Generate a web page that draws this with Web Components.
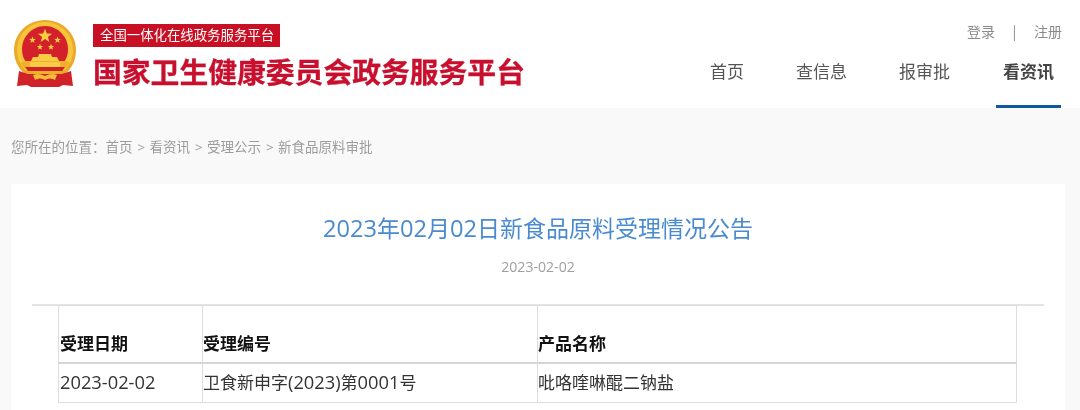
<!DOCTYPE html>
<html lang="zh-CN"><head><meta charset="utf-8"><title>新食品原料受理情况公告</title>
<style>
html,body{margin:0;height:410px;overflow:hidden;background:#f9f9f9;font-family:"Open Sans","Noto Sans CJK SC",sans-serif}
body{filter:blur(.35px)}
</style></head><body>
<site-header></site-header>
<bread-crumb></bread-crumb>
<article-card heading="2023年02月02日新食品原料受理情况公告" date="2023-02-02">
  <data-table></data-table>
</article-card>
<script>
const make=(name,html)=>customElements.define(name,class extends HTMLElement{
  constructor(){super();this.attachShadow({mode:'open'}).innerHTML=typeof html==='function'?html(this):html}
});
const star=(x,y,r)=>{let d='';for(let i=0;i<10;i++){const R=i%2?r*.4:r,a=-Math.PI/2+i*Math.PI/5;d+=(i?'L':'M')+(x+R*Math.cos(a)).toFixed(1)+' '+(y+R*Math.sin(a)).toFixed(1)}return `<path d="${d}Z"/>`};
const emblem=`<svg width="66" height="70" viewBox="0 0 66 70" aria-hidden="true" style="filter:blur(.5px);display:block">
<path d="M33 1C15 1 2 15 2 31c0 10 4 18 11 24h40c7-6 11-14 11-24C64 15 51 1 33 1Z" fill="#eba92a"/>
<path d="M33 3C17 3 5 16 5 31c0 8 3 15 8 20h40c5-5 8-12 8-20C61 16 49 3 33 3Z" fill="#f6c53c"/>
<path d="M33 7C20 7 10 18 10 30c0 5 1 9 4 13h38c3-4 4-8 4-13C56 18 46 7 33 7Z" fill="#d3202a"/>
<g fill="#f8cf3f">${star(33,17,7.500)}${star(20.500,21,3.600)}${star(45.500,21,3.600)}${star(28,28,3.400)}${star(39,28,3.400)}</g>
<path d="M8 44c6 8 15 12 25 12s19-4 25-12l-5-2H13Z" fill="#f0b02c"/>
<path d="M27 35h12l1 3h5l2 4H19l2-4h5ZM18 43h30v5H18Z" fill="#f8cc45"/>
<path d="M13 48h40l-3 4H16Z" fill="#cf2229"/>
<path d="M7 52l9 3h34l9-3 2 15-10-1-4 2H19l-4-2-10 1Z" fill="#cf2229"/>
<path d="M21 56c4-2 8-1 12 1 4-2 8-3 12-1l-2 5c-4-2-7-2-10 0-3-2-6-2-10 0Z" fill="#f4bd35"/>
</svg>`;
make('site-header',`<style>
:host{display:flex;height:108px;background:#fff;justify-content:space-between;box-sizing:border-box;padding-left:12px;padding-right:19px}
.brand{display:flex;gap:15px;align-items:flex-start;padding-top:19px}
.names{display:flex;flex-direction:column;align-items:flex-start;padding-top:5px}
.tag{background:#c80f23;color:#fff;font-size:13.400px;line-height:23px;padding:0 6px 0 7px;white-space:nowrap}
h1{margin:7px 0 0;color:#c8102e;font-size:28.800px;line-height:36px;font-weight:700;white-space:nowrap;-webkit-text-stroke:.3px #c8102e}
.right{display:flex;flex-direction:column;align-items:flex-end;font-family:"Noto Sans CJK SC",sans-serif}
.user{display:flex;align-items:center;color:#8a8a8a;font-size:14px;line-height:20px;margin-top:21px;margin-right:-1px}
.user b{font-weight:400;width:39px;text-align:center}
nav{display:flex;gap:38px;margin-top:10px;height:57px}
nav a{box-sizing:border-box;height:57px;padding:0 7px;font-size:17px;line-height:30px;padding-top:5px;color:#555}
nav a.on{font-weight:700;color:#444;border-bottom:3px solid #0f5a9c;margin-left:1px}
</style>
<div class="brand"><div>${emblem}</div><div class="names"><div class="tag">全国一体化在线政务服务平台</div><h1>国家卫生健康委员会政务服务平台</h1></div></div>
<div class="right"><div class="user"><span>登录</span><b>|</b><span>注册</span></div>
<nav><a>首页</a><a>查信息</a><a>报审批</a><a class="on">看资讯</a></nav></div>`);
make('bread-crumb',`<style>:host{display:flex;height:76px;box-sizing:border-box;padding:30px 0 0 11px;color:#9c9c9c;font-size:13.500px;line-height:18px;white-space:nowrap}
i{font-style:normal;margin:0 5px;width:7px;text-align:center}</style>
<span>您所在的位置：</span><span>首页</span><i>&gt;</i><span>看资讯</span><i>&gt;</i><span>受理公示</span><i>&gt;</i><span>新食品原料审批</span>`);
make('article-card',h=>`<style>:host{display:block;margin:0 15px 0 11px;background:#fff;padding:29px 21px 0;height:226px;box-sizing:border-box}
h2{margin:0;text-align:center;font-weight:400;font-size:23px;line-height:30px;color:#4a8bd0}
h2 span{font-size:23.600px}
p{margin:14px 0 0;text-align:center;color:#a0a0a0;font-size:14.100px;line-height:20px;padding-bottom:27px;border-bottom:2px solid #e4e4e4}
.body{padding:0 27px 0 26px;margin-top:-1px}</style>
<h2>${h.getAttribute('heading').replace(/\d+/g,'<span>$&</span>')}</h2><p>${h.getAttribute('date')}</p><div class="body"><slot></slot></div>`);
make('data-table',`<style>:host{display:block;font-family:"Open Sans","Noto Sans CJK SC",sans-serif}
table{border-collapse:collapse;width:959px;table-layout:fixed;color:#333;font-size:17px}
td,th{border:1.500px solid #ddd;padding:0;text-align:left;white-space:nowrap}
td:first-child,th:first-child{padding-left:1px}
tr:first-child th{border-bottom-width:2px;border-bottom-color:#d6d6d6}
th{height:57px;vertical-align:bottom;font-weight:700;color:#111;line-height:24px;padding-bottom:6px;box-sizing:border-box}
td{height:38px;line-height:24px}
.l{font-size:18.300px}
</style><table><colgroup><col style="width:144px"><col style="width:335px"><col></colgroup>
<tr><th>受理日期</th><th>受理编号</th><th>产品名称</th></tr>
<tr><td><span class="l">2023-02-02</span></td><td>卫食新申字<span class="l">(2023)</span>第<span class="l">0001</span>号</td><td>吡咯喹啉醌二钠盐</td></tr></table>`);
</script></body></html>
